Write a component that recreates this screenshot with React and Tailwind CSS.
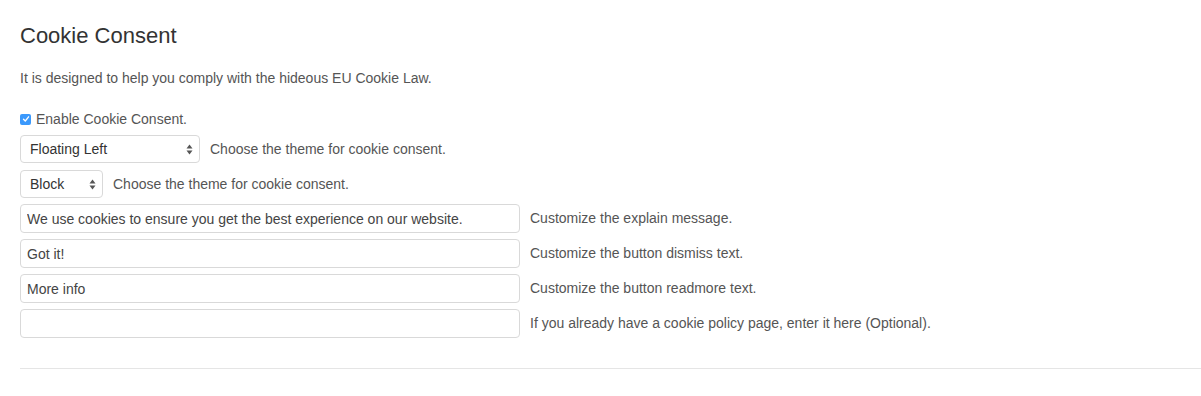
import { useState } from 'react'

const inputRows = [
  { value: 'We use cookies to ensure you get the best experience on our website.', help: 'Customize the explain message.' },
  { value: 'Got it!', help: 'Customize the button dismiss text.' },
  { value: 'More info', help: 'Customize the button readmore text.' },
  { value: '', help: 'If you already have a cookie policy page, enter it here (Optional).' },
]

function SelectBox({ label, width }) {
  return (
    <div className={`flex h-[28px] ${width} items-center justify-between rounded-[4px] border border-[#d9d9d9] bg-white pl-[9px] pr-[6px] text-[14px] text-[#333]`}>
      <span>{label}</span>
      <svg width="7" height="11" viewBox="0 0 7 11">
        <path d="M3.5 0.5 L6.5 4.5 L0.5 4.5 Z" fill="#555" />
        <path d="M3.5 10.5 L6.5 6.5 L0.5 6.5 Z" fill="#555" />
      </svg>
    </div>
  )
}

export default function App() {
  const [enabled, setEnabled] = useState(true)

  return (
    <div className="bg-white pl-5 pt-[22px] font-['Liberation_Sans',Arial,sans-serif] text-[14px] text-[#555]">
      <h2 className="text-[22px] leading-[28px] text-[#333]">Cookie Consent</h2>
      <p className="mt-[19px] leading-[18px]">It is designed to help you comply with the hideous EU Cookie Law.</p>

      <label className="mt-[23px] flex items-center gap-[5px] leading-[18px]">
        <span
          onClick={() => setEnabled(v => !v)}
          className={`flex h-[11px] w-[11px] items-center justify-center rounded-[2px] ${enabled ? 'bg-[#3b99fc]' : 'border border-[#aaa] bg-white'}`}
        >
          {enabled && (
            <svg width="8" height="8" viewBox="0 0 8 8">
              <path d="M1.5 4.2 L3.3 6 L6.6 1.8" stroke="#fff" strokeWidth="1.3" fill="none" strokeLinecap="round" strokeLinejoin="round" />
            </svg>
          )}
        </span>
        Enable Cookie Consent.
      </label>

      <div className="mt-[7px] flex items-center gap-[10px]">
        <SelectBox label="Floating Left" width="w-[180px]" />
        <span>Choose the theme for cookie consent.</span>
      </div>
      <div className="mt-[7px] flex items-center gap-[10px]">
        <SelectBox label="Block" width="w-[83px]" />
        <span>Choose the theme for cookie consent.</span>
      </div>

      <div className="mt-[6px] flex flex-col gap-[6px]">
        {inputRows.map(row => (
          <div key={row.help} className="flex items-center gap-[10px]">
            <input
              defaultValue={row.value}
              className="h-[29px] w-[500px] rounded-[4px] border border-[#d9d9d9] px-[6px] text-[14px] text-[#444] outline-none"
            />
            <span>{row.help}</span>
          </div>
        ))}
      </div>

      <hr className="mt-[30px] border-t border-[#e5e5e5]" />
      <div className="h-[27px]" />
    </div>
  )
}
